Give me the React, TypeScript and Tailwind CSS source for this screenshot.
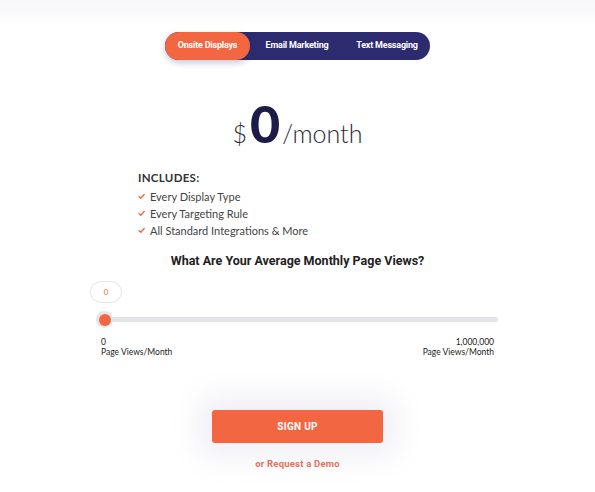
import { useState } from 'react';

const tabs = ['Onsite Displays', 'Email Marketing', 'Text Messaging'];
const includes = ['Every Display Type', 'Every Targeting Rule', 'All Standard Integrations & More'];

function Check() {
  return (
    <svg viewBox="0 0 10 10" className="h-[7px] w-[7px] shrink-0" fill="none">
      <path d="M1.5 5.2 L4 7.6 L8.8 2.2" stroke="#f26641" strokeWidth="2" strokeLinecap="round" strokeLinejoin="round" />
    </svg>
  );
}

export default function App() {
  const [active, setActive] = useState(0);
  const [views] = useState(0);

  return (
    <div className="flex h-[492px] w-[595px] flex-col bg-white" style={{ fontFamily: 'Lato, "Open Sans", sans-serif' }}>
      {/* faint header shadow */}
      <div className="h-[26px] w-full bg-gradient-to-b from-[#f7f7f9] via-[#fafafc] to-white" />

      {/* product tabs */}
      <div className="mt-[6px] flex justify-center">
        <div className="flex h-[28px] w-[265px] items-center rounded-full bg-[#2d2b6f]">
          {tabs.map((t, i) => (
            <button
              key={t}
              onClick={() => setActive(i)}
              className={
                'h-full rounded-full text-[9px] font-bold tracking-[-0.2px] text-white ' +
                (i === active
                  ? 'w-[85px] bg-[#f26641] shadow-[0_3px_6px_rgba(45,43,111,0.25)]'
                  : i === 1
                    ? 'w-[94px]'
                    : 'w-[86px]')
              }
              style={{ fontFamily: 'Roboto, sans-serif' }}
            >
              {t}
            </button>
          ))}
        </div>
      </div>

      {/* price */}
      <div className="mt-[37px] flex items-baseline justify-center text-[#2b2b3a]">
        <span className="text-[25px] font-light leading-none">$</span>
        <span className="ml-[3px] text-[52px] font-black leading-none text-[#1d1b47]">0</span>
        <span className="ml-[2px] text-[25px] font-light leading-none">/month</span>
      </div>

      {/* includes */}
      <div className="mt-[20px] pl-[138px]">
        <div className="text-[11.5px] font-bold tracking-[0.3px] text-[#333]">INCLUDES:</div>
        <ul className="mt-[2px] flex flex-col text-[11px] leading-[17px] text-[#444]">
          {includes.map((item) => (
            <li key={item} className="flex items-center gap-[5px]">
              <Check />
              {item}
            </li>
          ))}
        </ul>
      </div>

      <h2
        className="mt-[13px] text-center text-[12.5px] font-bold text-[#222]"
        style={{ fontFamily: 'Roboto, sans-serif' }}
      >
        What Are Your Average Monthly Page Views?
      </h2>

      {/* slider */}
      <div className="relative ml-[99px] mr-[97px] mt-[46px]">
        <div className="absolute -top-[36px] left-[-9px] flex h-[22px] w-[32px] items-center justify-center rounded-[11px] border border-[#e6e6ea] bg-white text-[8px] text-[#f26641]">
          {views}
        </div>
        <div className="relative h-[5px] rounded-full bg-[#e3e3e8]">
          <div className="absolute -top-[6px] left-[-3px] h-[17px] w-[17px] rounded-full bg-[#e6e6ea] p-[2.5px]">
            <div className="h-full w-full rounded-full bg-[#f26641]" />
          </div>
        </div>
        <div className="mt-[15px] flex justify-between pl-[2px] pr-[4px] text-[8.5px] leading-[10px] text-[#222]">
          <div>
            <div>0</div>
            <div>Page Views/Month</div>
          </div>
          <div className="text-right">
            <div>1,000,000</div>
            <div>Page Views/Month</div>
          </div>
        </div>
      </div>

      {/* call to action */}
      <div className="mt-[53px] flex flex-col items-center">
        <button
          className="h-[33px] w-[171px] rounded-[3px] bg-[#f26641] text-[10px] font-bold tracking-[0.3px] text-white shadow-[0_0_30px_12px_rgba(226,226,238,0.6)]"
          style={{ fontFamily: 'Roboto, sans-serif' }}
        >
          SIGN UP
        </button>
        <a
          href="#"
          className="mt-[14px] text-[9.5px] font-bold tracking-[0.2px] text-[#e8715a]"
          style={{ fontFamily: 'Roboto, sans-serif' }}
        >
          or Request a Demo
        </a>
      </div>
    </div>
  );
}
